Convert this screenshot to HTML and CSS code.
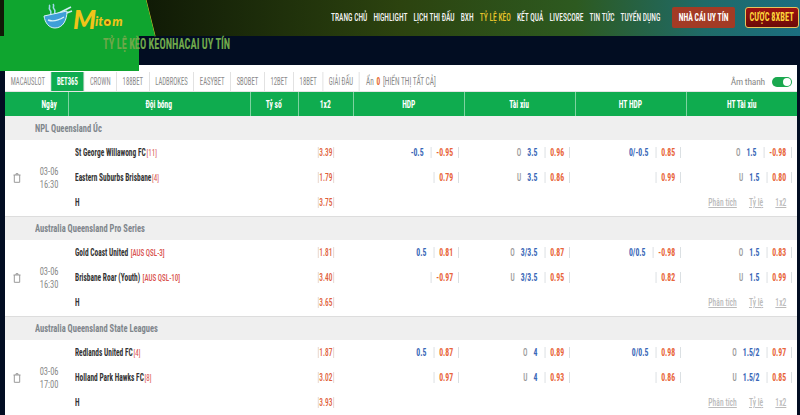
FILE: index.html
```html
<!DOCTYPE html>
<html lang="vi">
<head>
    <meta charset="UTF-8">
    <meta name="viewport" content="width=device-width, initial-scale=1.0">
    <title>Tỷ lệ kèo</title>
    <link rel="stylesheet" href="styles.css">
</head>
<body>
    <header class="topbar">
        <nav class="menu">
            <a href="#">TRANG CHỦ</a>
            <a href="#">HIGHLIGHT</a>
            <a href="#">LỊCH THI ĐẤU</a>
            <a href="#">BXH</a>
            <a href="#" class="current">TỶ LỆ KÈO</a>
            <a href="#">KẾT QUẢ</a>
            <a href="#">LIVESCORE</a>
            <a href="#">TIN TỨC</a>
            <a href="#">TUYỂN DỤNG</a>
        </nav>
        <a href="#" class="btn-trust"><span>NHÀ CÁI UY TÍN</span></a>
        <a href="#" class="btn-bet"><span>CƯỢC 8XBET</span></a>
    </header>

    <div class="logo-block">
        <svg class="bowl" width="30" height="26" viewBox="0 0 30 26">
            <path d="M6 2c2 1-1 3 1 5s0 3 1 5M10 1c2 2-1 3 1 5s0 3 1 5" fill="none" stroke="#9fd8e8" stroke-width="1.6"/>
            <path d="M12 12L28 4M13 14L29 8" stroke="#cfeef5" stroke-width="1.6"/>
            <path d="M1 13L24 8C24 17 20 25 12 25 6 25 2 20 1 13Z" fill="#3f9fd8" stroke="#d8f2f8"/>
            <path d="M5 17C10 19 16 17 21 14" fill="none" stroke="#d8f2f8" stroke-width="1.4"/>
        </svg>
        <span class="brand"><b>M</b>it<i class="flower"></i>m</span>
    </div>

    <main class="content">
        <h1 class="page-title"><span>TỶ LỆ KÈO KEONHACAI UY TÍN</span></h1>

        <div class="panel">
            <div class="tabs">
                <div class="tab-list">
                    <a href="#" class="tab">MACAUSLOT</a>
                    <a href="#" class="tab active">BET365</a>
                    <a href="#" class="tab">CROWN</a>
                    <a href="#" class="tab">188BET</a>
                    <a href="#" class="tab">LADBROKES</a>
                    <a href="#" class="tab">EASYBET</a>
                    <a href="#" class="tab">SBOBET</a>
                    <a href="#" class="tab">12BET</a>
                    <a href="#" class="tab">18BET</a>
                    <a href="#" class="tab">GIẢI ĐẤU</a>
                    <span class="hidden-count">Ẩn <b>0</b> [HIỂN THỊ TẤT CẢ]</span>
                </div>
                <span class="sound">Âm thanh <i class="switch"></i></span>
            </div>

            <table class="odds">
                <colgroup>
                    <col class="c-del"><col class="c-date"><col class="c-team"><col class="c-score"><col class="c-1x2">
                    <col class="c-odds"><col class="c-odds"><col class="c-odds"><col class="c-odds">
                </colgroup>
                <thead>
                    <tr>
                        <th colspan="2" class="th-date"><span>Ngày</span></th>
                        <th><span>Đội bóng</span></th>
                        <th><span>Tỷ số</span></th>
                        <th><span>1x2</span></th>
                        <th><span>HDP</span></th>
                        <th><span>Tài xỉu</span></th>
                        <th><span>HT HDP</span></th>
                        <th><span>HT Tài xỉu</span></th>
                    </tr>
                </thead>
                <tbody>
                    <tr class="league"><td colspan="9"><span>NPL Queensland Úc</span></td></tr>
                    <tr>
                        <td rowspan="3" class="del"><svg width="8" height="10" viewBox="0 0 8 10"><path d="M.5 2h7M3 2V.7h2V2M1.3 2v7.3h5.4V2" fill="none" stroke="#999"/></svg></td>
                        <td rowspan="3" class="date"><span>03-06<br>16:30</span></td>
                        <td class="team"><span>St George Willawong FC<em>[11]</em></span></td>
                        <td></td>
                        <td class="x12"><span>3.39</span></td>
                        <td><div class="cell"><span class="line">-0.5</span><span class="odd">-0.95</span></div></td>
                        <td><div class="cell"><span class="ou">O</span><span class="line">3.5</span><span class="odd">0.96</span></div></td>
                        <td><div class="cell"><span class="line">0/-0.5</span><span class="odd">0.85</span></div></td>
                        <td><div class="cell"><span class="ou">O</span><span class="line">1.5</span><span class="odd">-0.98</span></div></td>
                    </tr>
                    <tr>
                        <td class="team"><span>Eastern Suburbs Brisbane<em>[4]</em></span></td>
                        <td></td>
                        <td class="x12"><span>1.79</span></td>
                        <td><div class="cell"><span class="odd">0.79</span></div></td>
                        <td><div class="cell"><span class="ou">U</span><span class="line">3.5</span><span class="odd">0.86</span></div></td>
                        <td><div class="cell"><span class="odd">0.99</span></div></td>
                        <td><div class="cell"><span class="ou">U</span><span class="line">1.5</span><span class="odd">0.80</span></div></td>
                    </tr>
                    <tr class="last">
                        <td class="team"><span>H</span></td>
                        <td></td>
                        <td class="x12"><span>3.75</span></td>
                        <td colspan="4"><div class="links"><a href="#">Phân tích</a><a href="#">Tỷ lệ</a><a href="#">1x2</a></div></td>
                    </tr>

                    <tr class="league"><td colspan="9"><span>Australia Queensland Pro Series</span></td></tr>
                    <tr>
                        <td rowspan="3" class="del"><svg width="8" height="10" viewBox="0 0 8 10"><path d="M.5 2h7M3 2V.7h2V2M1.3 2v7.3h5.4V2" fill="none" stroke="#999"/></svg></td>
                        <td rowspan="3" class="date"><span>03-06<br>16:30</span></td>
                        <td class="team"><span>Gold Coast United <em class="rank">[AUS QSL-3]</em></span></td>
                        <td></td>
                        <td class="x12"><span>1.81</span></td>
                        <td><div class="cell"><span class="line">0.5</span><span class="odd">0.81</span></div></td>
                        <td><div class="cell"><span class="ou">O</span><span class="line">3/3.5</span><span class="odd">0.87</span></div></td>
                        <td><div class="cell"><span class="line">0/0.5</span><span class="odd">-0.98</span></div></td>
                        <td><div class="cell"><span class="ou">O</span><span class="line">1.5</span><span class="odd">0.83</span></div></td>
                    </tr>
                    <tr>
                        <td class="team"><span>Brisbane Roar (Youth) <em class="rank">[AUS QSL-10]</em></span></td>
                        <td></td>
                        <td class="x12"><span>3.40</span></td>
                        <td><div class="cell"><span class="odd">-0.97</span></div></td>
                        <td><div class="cell"><span class="ou">U</span><span class="line">3/3.5</span><span class="odd">0.95</span></div></td>
                        <td><div class="cell"><span class="odd">0.82</span></div></td>
                        <td><div class="cell"><span class="ou">U</span><span class="line">1.5</span><span class="odd">0.99</span></div></td>
                    </tr>
                    <tr class="last">
                        <td class="team"><span>H</span></td>
                        <td></td>
                        <td class="x12"><span>3.65</span></td>
                        <td colspan="4"><div class="links"><a href="#">Phân tích</a><a href="#">Tỷ lệ</a><a href="#">1x2</a></div></td>
                    </tr>

                    <tr class="league"><td colspan="9"><span>Australia Queensland State Leagues</span></td></tr>
                    <tr>
                        <td rowspan="3" class="del"><svg width="8" height="10" viewBox="0 0 8 10"><path d="M.5 2h7M3 2V.7h2V2M1.3 2v7.3h5.4V2" fill="none" stroke="#999"/></svg></td>
                        <td rowspan="3" class="date"><span>03-06<br>17:00</span></td>
                        <td class="team"><span>Redlands United FC<em>[4]</em></span></td>
                        <td></td>
                        <td class="x12"><span>1.87</span></td>
                        <td><div class="cell"><span class="line">0.5</span><span class="odd">0.87</span></div></td>
                        <td><div class="cell"><span class="ou">O</span><span class="line">4</span><span class="odd">0.89</span></div></td>
                        <td><div class="cell"><span class="line">0/0.5</span><span class="odd">0.98</span></div></td>
                        <td><div class="cell"><span class="ou">O</span><span class="line">1.5/2</span><span class="odd">0.97</span></div></td>
                    </tr>
                    <tr>
                        <td class="team"><span>Holland Park Hawks FC<em>[8]</em></span></td>
                        <td></td>
                        <td class="x12"><span>3.02</span></td>
                        <td><div class="cell"><span class="odd">0.97</span></div></td>
                        <td><div class="cell"><span class="ou">U</span><span class="line">4</span><span class="odd">0.93</span></div></td>
                        <td><div class="cell"><span class="odd">0.86</span></div></td>
                        <td><div class="cell"><span class="ou">U</span><span class="line">1.5/2</span><span class="odd">0.85</span></div></td>
                    </tr>
                    <tr class="last">
                        <td class="team"><span>H</span></td>
                        <td></td>
                        <td class="x12"><span>3.93</span></td>
                        <td colspan="4"><div class="links"><a href="#">Phân tích</a><a href="#">Tỷ lệ</a><a href="#">1x2</a></div></td>
                    </tr>
                </tbody>
            </table>
        </div>
    </main>
</body>
</html>
```

FILE: styles.css
```css
* {
    box-sizing: border-box;
}
body {
    margin: 0;
    height: 415px;
    overflow: hidden;
    position: relative;
    background-color: #020d22;
    font-family: "Roboto Condensed", "Liberation Sans Narrow", Roboto, sans-serif;
    font-stretch: 75%;
    font-size: 10px;
}
a {
    text-decoration: none;
    color: inherit;
}

/* top bar */
.topbar {
    height: 36px;
    display: flex;
    align-items: center;
    justify-content: flex-end;
    padding: 0 1px 2px 0;
    background: linear-gradient(90deg, #101a06 18%, #2c430f 50%, #2d5a20 72%, #1f6a68 88%, #1b6e80 100%);
}
.menu {
    display: flex;
    flex: none;
    gap: 9px;
    margin-right: 12px;
    color: #f2f2f2;
    font-size: 11px;
    font-weight: 500;
    white-space: nowrap;
    transform: scaleX(.68);
    transform-origin: right center;
}
.menu .current {
    color: #e6c32b;
}
.btn-trust, .btn-bet {
    height: 21px;
    display: flex;
    flex: none;
    align-items: center;
    justify-content: center;
    font-weight: 700;
    white-space: nowrap;
}
.btn-trust span, .btn-bet span {
    display: inline-block;
    transform: scaleX(.7);
}
.btn-trust {
    width: 63px;
    margin-right: 10px;
    color: #fff;
    background-color: #a33b25;
    border-radius: 2px;
    font-size: 11px;
}
.btn-bet {
    width: 54px;
    color: #fdd33a;
    background: linear-gradient(#9c1210, #6c0a08);
    border: 1px solid #e8c45c;
    border-radius: 3px;
    font-size: 12px;
}

/* logo sits over the title */
.logo-block {
    position: absolute;
    left: 0;
    top: 0;
    width: 160px;
    height: 72px;
    padding: 3px 0 0 43px;
    display: flex;
    align-items: flex-start;
    background-color: #0fa52f;
    clip-path: polygon(4px 0, 146px 0, 155px 36px, 139px 36px, 139px 71px, 0 71px, 0 36px, 4px 36px);
}
.bowl {
    flex: none;
}
.brand {
    margin: 4px 0 0 0;
    color: #f0c419;
    font-family: Lato, sans-serif;
    font-stretch: normal;
    font-size: 13px;
    font-weight: 900;
    font-style: italic;
    line-height: 24px;
    white-space: nowrap;
}
.brand b {
    font-size: 26px;
    vertical-align: -3px;
    margin-right: -1px;
}
.flower {
    display: inline-block;
    width: 7px;
    height: 7px;
    margin: 0 1px;
    border-radius: 50%;
    background-color: #7a4a10;
    border: 2px solid #f0c419;
}

.topbar::after {
    content: "";
    position: absolute;
    left: 150px;
    top: -1px;
    width: 1px;
    height: 38px;
    background-color: #d8c22a;
    transform: rotate(-14deg);
}

/* content */
.content {
    padding-left: 5px;
    padding-right: 3px;
}
.page-title {
    height: 29px;
    margin: 0;
    padding: 0 0 0 98px;
    color: #6fa84a;
    font-size: 14px;
    font-weight: 700;
    line-height: 17px;
    white-space: nowrap;
}
.page-title span {
    display: inline-block;
    transform: scaleX(.74);
    transform-origin: left center;
}
.panel {
    background-color: #fff;
}
.tabs {
    height: 27px;
    padding-top: 7px;
    display: flex;
    align-items: stretch;
    justify-content: space-between;
    border-bottom: 1px solid #e4e4e4;
    color: #8a8a8a;
    font-size: 10px;
}
.tab-list {
    display: flex;
    flex: none;
    align-items: stretch;
    white-space: nowrap;
    transform: scaleX(.67);
    transform-origin: left center;
}
.tab {
    display: flex;
    align-items: center;
    justify-content: center;
    padding: 0 8.5px;
    border-right: 1px solid #d4d4d4;
}
.tab.active {
    background-color: #0fac4f;
    color: #fff;
    font-weight: 700;
}
.hidden-count {
    margin-left: 10px;
    display: flex;
    align-items: center;
    gap: 4px;
    font-size: 11px;
}
.hidden-count b {
    color: #e8682c;
}
.sound {
    flex: none;
    margin-right: 5px;
    display: flex;
    align-items: center;
    gap: 7px;
    font-size: 9.5px;
    letter-spacing: -.2px;
    color: #8a8a8a;
}
.switch {
    position: relative;
    width: 20px;
    height: 10px;
    border-radius: 5px;
    background-color: #1aa84f;
}
.switch::after {
    content: "";
    position: absolute;
    right: 1px;
    top: 1px;
    width: 8px;
    height: 8px;
    border-radius: 50%;
    background-color: #fff;
}

/* table */
.odds {
    width: 792px;
    table-layout: fixed;
    border-collapse: collapse;
}
.c-del { width: 25px; }
.c-date { width: 38px; }
.c-team { width: 182px; }
.c-score { width: 48px; }
.c-1x2 { width: 55px; }
.c-odds { width: 111px; }
.odds th {
    height: 24px;
    padding: 0;
    background-color: #0fac4f;
    color: #fff;
    font-size: 10px;
    font-weight: 700;
    border-left: 1px solid #7ed3a0;
}
.odds th:first-child {
    border-left: 0;
}
.odds th.th-date {
    padding-left: 25px;
}
.odds th span {
    display: inline-block;
    transform: scaleX(.75);
}
.odds td {
    height: 25px;
    padding: 0;
    color: #333;
    white-space: nowrap;
}
.league td {
    height: 24px;
    padding-left: 30px;
    background-color: #efefef;
    color: #7f868c;
    font-size: 10px;
    font-weight: 700;
}
.league span {
    display: inline-block;
    transform: scaleX(.85);
    transform-origin: left center;
}
.last td {
    height: 26px;
    border-bottom: 1px solid #ddd;
}
.odds td.del {
    padding-left: 8px;
    border-bottom: 1px solid #ddd;
}
.del svg {
    display: block;
}
.odds td.date {
    text-align: center;
    color: #8a8a8a;
    font-size: 10px;
    line-height: 13px;
    border-bottom: 1px solid #ddd;
}
.date span {
    display: inline-block;
    transform: scaleX(.85);
}
.odds td.team {
    padding-left: 7px;
    color: #333;
    font-size: 10px;
    font-weight: 700;
}
.team span {
    display: inline-block;
    transform: scaleX(.74);
    transform-origin: left center;
}
.team em {
    margin-left: 1px;
    color: #d9534f;
    font-style: normal;
    font-weight: 400;
    font-size: 9.5px;
}
.team em.rank {
    font-weight: 500;
}
.x12 {
    text-align: center;
}
.x12 span {
    display: inline-block;
    padding: 0 1px;
    line-height: 11px;
    border-left: 1px solid #e0c8bc;
    border-right: 1px solid #e0c8bc;
    color: #e0603a;
    font-size: 10px;
    font-weight: 500;
    transform: scaleX(.74);
}
.cell {
    display: flex;
    justify-content: flex-end;
    align-items: center;
    padding-right: 6.8px;
    font-size: 10.5px;
    font-weight: 700;
    transform: scaleX(.74);
    transform-origin: right center;
}
.ou {
    margin-right: 8px;
    color: #999;
    font-size: 10px;
    font-weight: 500;
}
.line {
    margin-right: 9.5px;
    color: #3a68b8;
}
.odd {
    padding: 0 6.8px;
    line-height: 11px;
    color: #e8643a;
    border-left: 1px solid #cfd5d9;
    border-right: 1px solid #cfd5d9;
}
.links {
    display: flex;
    justify-content: flex-end;
    gap: 16px;
    padding-right: 14px;
    font-size: 10px;
    font-weight: 500;
    transform: scaleX(.76);
    transform-origin: right center;
}
.links a {
    color: #bbb;
    text-decoration: underline;
}
```
